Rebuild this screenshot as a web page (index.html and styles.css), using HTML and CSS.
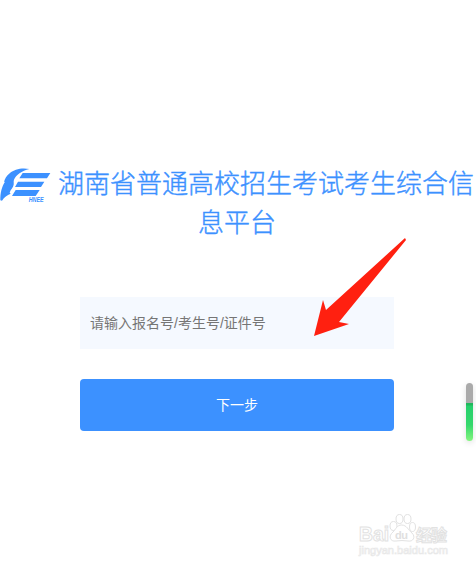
FILE: index.html
```html
<!DOCTYPE html>
<html lang="zh-CN">
<head>
<meta charset="utf-8">
<title>湖南省普通高校招生考试考生综合信息平台</title>
<link rel="stylesheet" href="styles.css">
</head>
<body>
<main class="page">
  <h1 class="title"><svg class="logo" viewBox="0 0 150 105" aria-hidden="true">
      <path d="M88 6C66 1 42 7 30 18C20 26 14 36 12 45L15 44C6 58 0 78 1 100L6 101C13 90 21 84 32 80L29 77C31 68 40 61 41 53C42 46 40 43 42 38C48 24 65 12 88 6Z"/>
      <path d="M68 18H151L141 34H58ZM54 44H133L123 60H45ZM47 69H119L107 87H36Z"/>
      <text x="86" y="105" textLength="45" lengthAdjust="spacingAndGlyphs">HNEE</text>
    </svg>湖南省普通高校招生考试考生综合信<br>息平台</h1>
  <form class="form">
    <input class="field" type="text" placeholder="请输入报名号/考生号/证件号">
    <button class="next" type="button">下一步</button>
  </form>
</main>
<svg class="arrow" viewBox="0 0 94 100" aria-hidden="true"><path d="M92 0L93 2L26 84L36 86L1 98L10 62L13 72Z"/></svg>
<div class="gauge"></div>
<svg class="watermark" viewBox="0 0 110 60" aria-hidden="true">
  <g class="outline">
    <ellipse cx="43.500" cy="21" rx="3.500" ry="4.500"/><ellipse cx="49.500" cy="14" rx="3.500" ry="4.500"/><ellipse cx="57.500" cy="14" rx="3.500" ry="4.500"/><ellipse cx="62.500" cy="22" rx="3" ry="4.500"/>
    <path d="M51.500 20C57 20 58 25 62 28C66 32 63 37 58 36Q52 35 46 36C40 37 38 31 43 27C46 24 47 20 51.500 20Z"/>
    <text class="brand" x="9" y="36" textLength="30" lengthAdjust="spacingAndGlyphs">Bai</text>
    <text class="brand cjk" x="66" y="36" textLength="31">经验</text>
  </g>
  <text class="du" x="45" y="34" textLength="13">du</text>
  <text class="site" x="9" y="49" textLength="89" lengthAdjust="spacingAndGlyphs">jingyan.baidu.com</text>
</svg>
</body>
</html>
```
FILE: styles.css
```css
* { box-sizing: border-box; }
body {
  margin: 0;
  height: 568px;
  position: relative;
  overflow: hidden;
  background: #fff;
  font-family: "Liberation Sans", "Noto Sans CJK SC", sans-serif;
}
.page { padding-top: 162px; }
.title {
  width: 474px;
  margin: 0;
  color: #3c91ff;
  font: 300 26px/39px "Noto Sans CJK SC", sans-serif;
  -webkit-text-stroke: .4px #3c91ff;
  text-align: center;
  white-space: nowrap;
}
.logo {
  width: 50px;
  height: 35px;
  margin: 5px 8px -3px 0;
  vertical-align: top;
  fill: #3c91ff;
  overflow: visible;
  -webkit-text-stroke: 0;
}
.logo text { font: italic bold 19px "Liberation Sans", sans-serif; }
.form {
  display: flex;
  flex-direction: column;
  gap: 30px;
  width: 314px;
  margin: 57px 0 0 80px;
}
.field, .next {
  height: 52px;
  border: 0;
  font: 300 14px "Liberation Sans", "Noto Sans CJK SC", sans-serif;
}
.field { padding: 0 10px 1px; background: #f5f9ff; border-radius: 0; }
.field::placeholder { color: #757575; opacity: 1; font-weight: 400; }
.next { padding-bottom: 4px; border-radius: 4px; background: #3c91ff; color: #fff; font-weight: 400; }
.arrow {
  position: absolute;
  left: 313px;
  top: 238px;
  width: 94px;
  height: 100px;
  fill: #ff2010;
}
.gauge {
  position: absolute;
  left: 466px;
  top: 383px;
  width: 7px;
  height: 58px;
  border-radius: 4px;
  background: linear-gradient(#aaa 0 20px, #1fb85c 20px 22px, #26cf6c 23px, #35d86c 42px, #83f57e 58px);
  box-shadow: 0 2px 6px rgba(0, 0, 0, .13);
}
.watermark {
  position: absolute;
  left: 350px;
  top: 505px;
  width: 110px;
  height: 60px;
}
.outline { fill: #fff; stroke: #e2e2e2; stroke-width: 1; }
.brand { font: bold 20px "Liberation Sans", sans-serif; }
.cjk { font: bold 16px "Noto Sans CJK SC", sans-serif; }
.du { font: bold 11px "Liberation Sans", sans-serif; fill: #e0e0e0; }
.site { font: 11px "Liberation Sans", sans-serif; fill: #fff; stroke: #e8e8e8; stroke-width: .7; }
```
